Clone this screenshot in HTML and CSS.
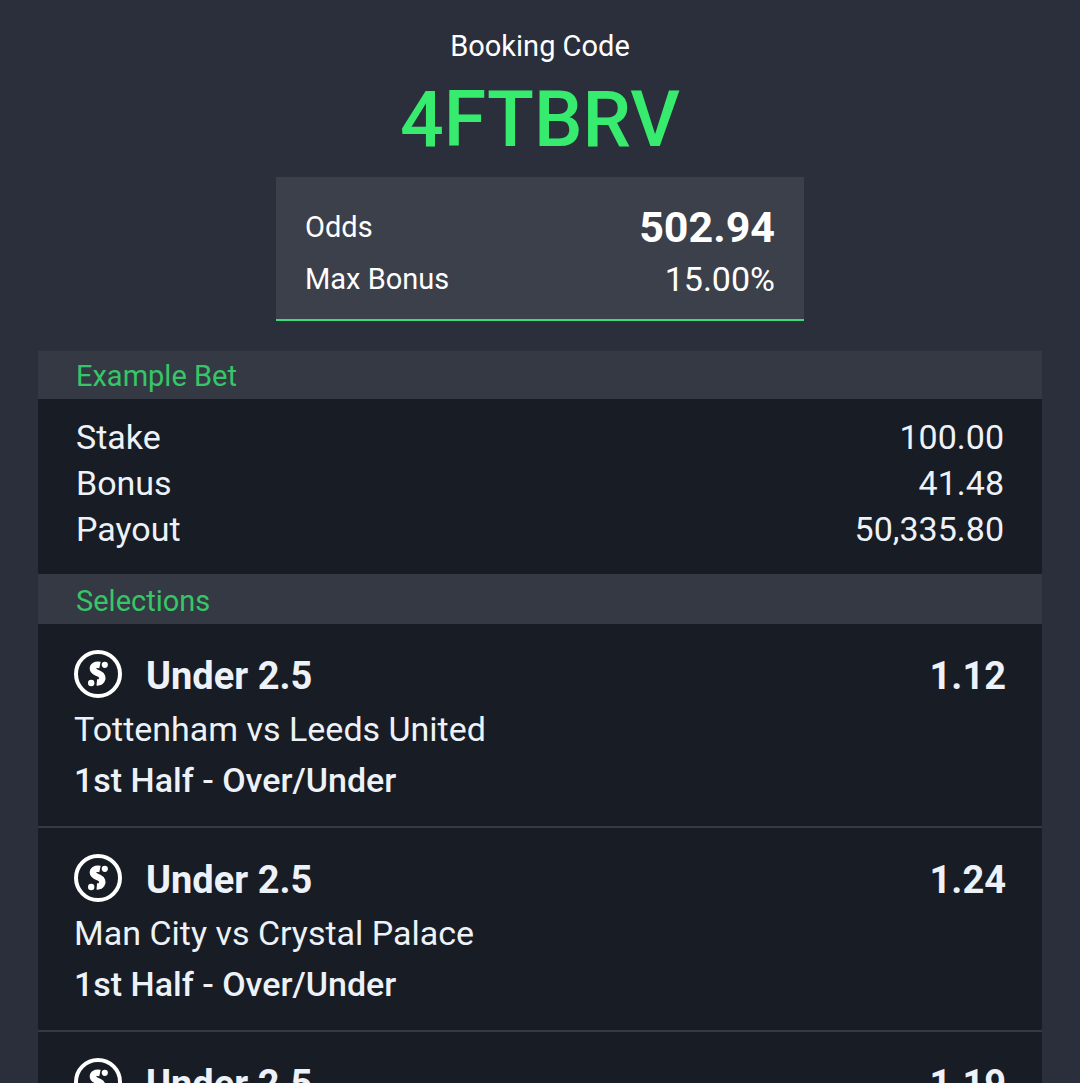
FILE: index.html
```html
<!DOCTYPE html>
<html lang="en">
<head>
<meta charset="utf-8">
<meta name="viewport" content="width=device-width, initial-scale=1">
<title>Booking Code 4FTBRV</title>
<link rel="stylesheet" href="styles.css">
</head>
<body>
<svg class="symbols" aria-hidden="true">
  <symbol id="coin" viewBox="0 0 48 48">
    <circle cx="24" cy="24" r="22" fill="none" stroke="#fff" stroke-width="4"/>
    <path d="M26 15C21.4 14 18.8 16.2 18.9 18.6C19 21.8 22.5 22.4 25 23.6C28.4 25.2 29.2 28 27.6 30.4C26.6 32 25 32.6 22.8 32.4" fill="none" stroke="#fff" stroke-width="6.4"/>
    <circle cx="30.8" cy="14.8" r="3.1" fill="#fff"/>
    <circle cx="17.2" cy="33" r="3.2" fill="#fff"/>
  </symbol>
</svg>
<main class="page">
  <header class="booking">
    <p class="booking-label">Booking Code</p>
    <h1 class="booking-code">4FTBRV</h1>
    <dl class="summary">
      <div class="summary-row"><dt>Odds</dt><dd class="odds-total">502.94</dd></div>
      <div class="summary-row"><dt>Max Bonus</dt><dd>15.00%</dd></div>
    </dl>
  </header>
  <section class="slip">
    <h2 class="bar">Example Bet</h2>
    <dl class="example">
      <div class="example-row"><dt>Stake</dt><dd>100.00</dd></div>
      <div class="example-row"><dt>Bonus</dt><dd>41.48</dd></div>
      <div class="example-row"><dt>Payout</dt><dd>50,335.80</dd></div>
    </dl>
    <h2 class="bar bar-selections">Selections</h2>
    <ul class="selections">
      <li class="selection">
        <div class="pick"><svg class="coin" aria-hidden="true"><use href="#coin"/></svg><span>Under 2.5</span><span class="pick-odds">1.12</span></div>
        <p class="match">Tottenham vs Leeds United</p>
        <p class="market">1st Half - Over/Under</p>
      </li>
      <li class="selection">
        <div class="pick"><svg class="coin" aria-hidden="true"><use href="#coin"/></svg><span>Under 2.5</span><span class="pick-odds">1.24</span></div>
        <p class="match">Man City vs Crystal Palace</p>
        <p class="market">1st Half - Over/Under</p>
      </li>
      <li class="selection">
        <div class="pick"><svg class="coin" aria-hidden="true"><use href="#coin"/></svg><span>Under 2.5</span><span class="pick-odds">1.19</span></div>
      </li>
    </ul>
  </section>
</main>
</body>
</html>
```
FILE: styles.css
```css
* { box-sizing: border-box; margin: 0; padding: 0; }

body {
  background: #2b2f3b;
  color: #edf1f8;
  font-family: Roboto, "Liberation Sans", sans-serif;
}

.symbols { display: none; }

.page {
  height: 100vh;
  overflow-y: auto;
  scrollbar-width: none;
  padding: 29px 38px 0;
}

.booking {
  display: flex;
  flex-direction: column;
  align-items: center;
  color: #fff;
}

.booking-label { font-size: 29px; line-height: 34px; }

.booking-code {
  margin: 12px 0;
  color: #37eb6e;
  font-size: 77px;
  font-weight: 500;
  line-height: 90px;
}

.summary {
  width: 100%;
  max-width: 528px;
  padding: 24px 29px 14px;
  background: #3c404b;
  border-bottom: 2px solid #3cdc78;
}

.summary-row {
  display: flex;
  justify-content: space-between;
  font-size: 34px;
  line-height: 52px;
}

.summary-row dt { font-size: 29px; }
.summary-row .odds-total { font-size: 43px; font-weight: 700; }

.slip { margin-top: 30px; }

.bar {
  padding: 2px 38px 0;
  background: #353944;
  color: #36c667;
  font-size: 29px;
  font-weight: 400;
  line-height: 46px;
}

.bar-selections { padding-top: 4px; }

.example {
  padding: 15px 38px 22px;
  background: #181c24;
}

.example-row {
  display: flex;
  justify-content: space-between;
  font-size: 34px;
  line-height: 46px;
}

.selections { list-style: none; background: #181c24; }

.selection {
  padding: 26px 36px 20px;
  border-bottom: 2px solid #353944;
}

.pick {
  display: flex;
  align-items: flex-start;
  gap: 24px;
  margin-bottom: 2px;
  font-size: 38px;
  font-weight: 700;
  line-height: 52px;
}

.coin { flex: none; width: 48px; height: 48px; }
.pick-odds { margin-left: auto; }

.match, .market { font-size: 34px; line-height: 51px; }
.market { font-weight: 500; }
```
